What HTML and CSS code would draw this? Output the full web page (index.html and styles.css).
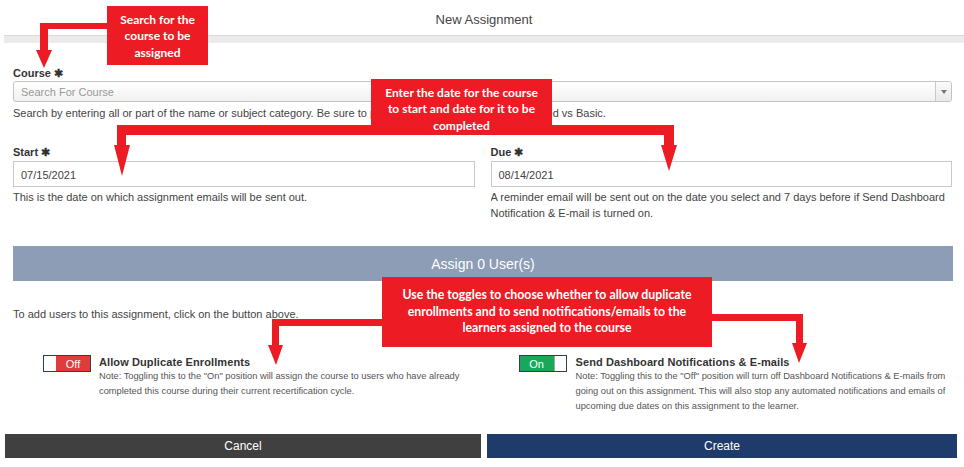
FILE: index.html
```html
<!DOCTYPE html>
<html>
<head>
<meta charset="utf-8">
<title>New Assignment</title>
<link rel="stylesheet" href="styles.css">
</head>
<body>
<div class="page">
  <header class="header"><h1 class="title">New Assignment</h1></header>
  <div class="band"></div>

  <main class="form">
    <label class="label label-course">Course <span class="req">✱</span></label>
    <div class="select">
      <span class="placeholder">Search For Course</span>
      <span class="select-btn"><span class="caret"></span></span>
    </div>
    <p class="help">Search by entering all or part of the name or subject category. Be sure to pick the correct version, e.g. Advanced vs Basic.</p>

    <div class="dates">
      <div class="field">
        <label class="label">Start <span class="req">✱</span></label>
        <div class="date-input">07/15/2021</div>
        <p class="help help-tall">This is the date on which assignment emails will be sent out.</p>
      </div>
      <div class="field">
        <label class="label">Due <span class="req">✱</span></label>
        <div class="date-input">08/14/2021</div>
        <p class="help help-tall">A reminder email will be sent out on the date you select and 7 days before if Send Dashboard Notification &amp; E-mail is turned on.</p>
      </div>
    </div>

    <div class="assign-bar">Assign 0 User(s)</div>
    <p class="help help-add">To add users to this assignment, click on the button above.</p>

    <div class="options">
      <div class="option option-left">
        <div class="toggle toggle-off"><span class="knob"></span><span class="state">Off</span></div>
        <div class="option-text">
          <div class="option-title">Allow Duplicate Enrollments</div>
          <div class="option-note">Note: Toggling this to the "On" position will assign the course to users who have already completed this course during their current recertification cycle.</div>
        </div>
      </div>
      <div class="option option-right">
        <div class="toggle toggle-on"><span class="state">On</span><span class="knob"></span></div>
        <div class="option-text">
          <div class="option-title">Send Dashboard Notifications &amp; E-mails</div>
          <div class="option-note">Note: Toggling this to the "Off" position will turn off Dashboard Notifications &amp; E-mails from going out on this assignment. This will also stop any automated notifications and emails of upcoming due dates on this assignment to the learner.</div>
        </div>
      </div>
    </div>
  </main>

  <footer class="actions">
    <button class="btn btn-cancel">Cancel</button>
    <button class="btn btn-create">Create</button>
  </footer>

  <svg class="arrows" width="964" height="467" viewBox="0 0 964 467">
    <g fill="#ed1c24">
      <rect x="40" y="23" width="70" height="6"/>
      <rect x="40" y="23" width="8" height="28"/>
      <polygon points="36,50 52,50 44,68"/>

      <rect x="117" y="125" width="557" height="10"/>
      <rect x="117" y="125" width="9" height="21"/>
      <polygon points="114,145 130,145 122,176"/>
      <rect x="664" y="125" width="10" height="21"/>
      <polygon points="661,145 677,145 669,171"/>

      <rect x="272" y="319" width="112" height="7"/>
      <rect x="272" y="319" width="7" height="27"/>
      <polygon points="268,345 283,345 276,365"/>
      <rect x="710" y="314" width="93" height="7"/>
      <rect x="796" y="314" width="7" height="30"/>
      <polygon points="792,343 807,343 799,363"/>
    </g>
  </svg>
  <div class="callout callout-1">Search for the<br>course to be<br>assigned</div>
  <div class="callout callout-2">Enter the date for the course<br>to start and date for it to be<br>completed</div>
  <div class="callout callout-3">Use the toggles to choose whether to allow duplicate<br>enrollments and to send notifications/emails to the<br>learners assigned to the course</div>
</div>
</body>
</html>
```

FILE: styles.css
```css
* { box-sizing: border-box; }
html, body { margin: 0; padding: 0; background: #fff; }
body { font-family: "Liberation Sans", Arial, sans-serif; color: #333; }

.page { position: relative; width: 964px; height: 467px; overflow: hidden; }

.header { height: 35px; display: flex; align-items: center; justify-content: center; padding-top: 3px; padding-left: 4px; }
.title { margin: 0; font-size: 13px; font-weight: normal; color: #444; }

.band { margin-left: 4px; height: 8px; background: #ebebeb; border-top: 1px solid #dadada; }

.form { padding: 0 12px 0 13px; }

.label { display: block; font-size: 11px; line-height: 13px; font-weight: bold; color: #333; margin-top: 24px; }
.req { font-size: 11px; }

.select { margin-top: 1px; height: 21px; display: flex; align-items: stretch; border: 1px solid #c4c4c4; border-radius: 3px; background: linear-gradient(#ffffff, #f1f1f1); }
.placeholder { flex: 1; font-size: 11px; color: #999; padding-left: 7px; display: flex; align-items: center; }
.select-btn { width: 16px; border-left: 1px solid #c8c8c8; display: flex; align-items: center; justify-content: center; background: linear-gradient(#fbfbfb, #e9e9e9); border-radius: 0 3px 3px 0; }
.caret { width: 0; height: 0; border-left: 3px solid transparent; border-right: 3px solid transparent; border-top: 4px solid #777; }

.help { margin: 4px 0 0; font-size: 11px; line-height: 14px; color: #444; white-space: nowrap; overflow: hidden; }
.help-tall { white-space: normal; line-height: 16px; margin-top: 2px; }

.dates { display: grid; grid-template-columns: 1fr 1fr; column-gap: 16px; }
.dates .label { margin-top: 26px; }
.date-input { margin-top: 2px; height: 26px; border: 1px solid #c9c9c9; font-size: 11px; color: #444; display: flex; align-items: center; padding-left: 7px; padding-top: 1px; }

.assign-bar { margin-top: 25px; height: 35px; margin-right: -1px; background: #8c9db5; color: #fff; font-size: 14px; display: flex; align-items: center; justify-content: center; }

.help-add { margin-top: 26px; }

.options { display: grid; grid-template-columns: 1fr 1fr; column-gap: 16px; margin-top: 33px; height: 80px; }
.option { display: flex; align-items: flex-start; }
.option-left { padding-left: 30px; }
.option-right { padding-left: 28px; }
.option-text { margin-left: 8px; margin-top: 1px; }
.option-right .option-text { margin-left: 9px; }
.option-title { font-size: 11px; line-height: 14px; font-weight: bold; color: #333; letter-spacing: 0.1px; }
.option-note { font-size: 9.3px; line-height: 15px; color: #555; }

.toggle { width: 48px; height: 17px; margin-top: 1px; display: flex; border: 1px solid #2f3e56; flex-shrink: 0; }
.knob { width: 12px; background: #fff; }
.state { flex: 1; color: #fff; font-size: 11px; display: flex; align-items: center; justify-content: center; }
.toggle-off .state { background: #e03c3c; }
.toggle-on .state { background: #17a85a; }
.toggle-on .knob { border-left: 1px solid #9aa; }

.actions { display: flex; gap: 6px; padding: 0 7px 0 5px; }
.btn { flex: 1; height: 24px; border: 0; color: #fff; font-family: "Liberation Sans", Arial, sans-serif; font-size: 12px; padding: 0; }
.btn-cancel { background: #404041; flex: 0 0 476px; }
.btn-create { background: #1f3b6b; }

.arrows { position: absolute; left: 0; top: 0; pointer-events: none; }

.callout { position: absolute; background: #ed1c24; color: #fff; font-family: Lato, "Open Sans", sans-serif; font-weight: bold; font-size: 12px; line-height: 16.5px; text-align: center; display: flex; align-items: center; justify-content: center; }
.callout-1 { left: 107px; top: 6px; width: 101px; height: 59px; padding-top: 2px; }
.callout-2 { left: 371px; top: 79px; width: 181px; height: 56px; padding-top: 5px; }
.callout-3 { left: 382px; top: 277px; width: 330px; height: 70px; font-size: 12.3px; }
```
